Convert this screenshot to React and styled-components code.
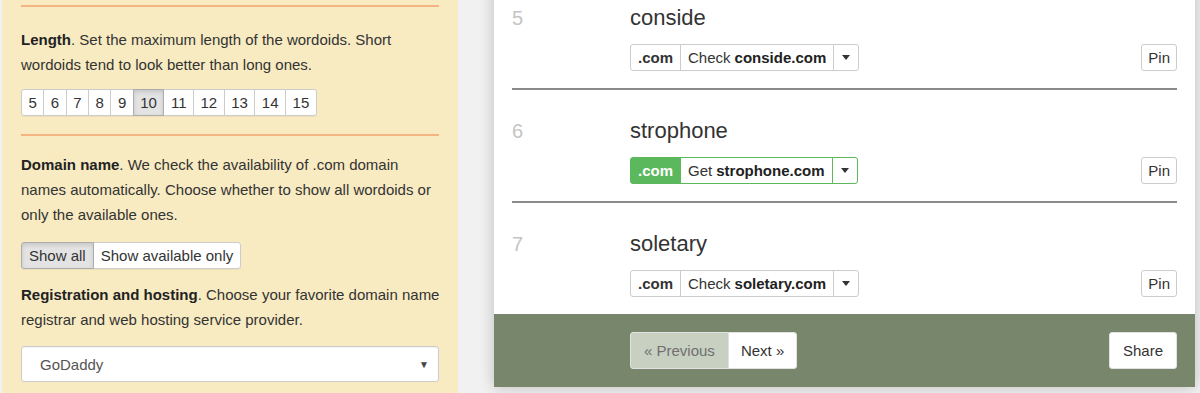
import React from "react";
import styled, { createGlobalStyle } from "styled-components";

const Global = createGlobalStyle`
  html, body { margin: 0; padding: 0; }
  body {
    background: #f1f1f1;
    font-family: "Liberation Sans", Arial, sans-serif;
    font-size: 15px;
    color: #333;
    height: 393px;
    overflow: hidden;
  }
`;

const Page = styled.div`
  display: flex;
  align-items: flex-start;
  gap: 36px;
  padding-left: 2px;
  height: 393px;
`;

const Sidebar = styled.aside`
  width: 456px;
  box-sizing: border-box;
  height: 393px;
  background: #f8ebc2;
  padding: 5px 19px 0 19px;
  flex-shrink: 0;
`;

const Rule = styled.div`
  height: 2px;
  background: #f4b583;
  margin-top: ${(p) => p.$mt || 0}px;
`;

const Para = styled.p`
  margin: ${(p) => p.$mt || 0}px -4px 0 0;
  line-height: 25px;
  font-size: 15px;
  color: #333;
  b { color: #222; }
`;

const Group = styled.div`
  display: inline-flex;
  margin-top: ${(p) => p.$mt || 0}px;
  border-radius: 3px;
  box-shadow: 0 1px 1px rgba(0,0,0,0.05);
`;

const SegButton = styled.button`
  font-family: inherit;
  font-size: 15px;
  line-height: 19px;
  padding: 3px ${(p) => p.$px || 6.5}px;
  margin: 0 0 0 -1px;
  border: 1px solid ${(p) => (p.$active ? "#adadad" : "#ccc")};
  background: ${(p) => (p.$active ? "#e3e3e3" : "#fff")};
  box-shadow: ${(p) => (p.$active ? "inset 0 2px 4px rgba(0,0,0,0.13)" : "none")};
  color: #333;
  position: relative;
  z-index: ${(p) => (p.$active ? 1 : 0)};
  &:first-child { margin-left: 0; border-radius: 3px 0 0 3px; }
  &:last-child { border-radius: 0 3px 3px 0; }
`;

const Select = styled.div`
  margin-top: 14px;
  height: 36px;
  box-sizing: border-box;
  display: flex;
  align-items: center;
  justify-content: space-between;
  background: #fff;
  border: 1px solid #ccc;
  border-radius: 3px;
  padding: 0 9px 0 18px;
  font-size: 15px;
  color: #555;
  box-shadow: inset 0 1px 1px rgba(0,0,0,0.06);
`;

const SelectArrow = styled.span`
  font-size: 10px;
  color: #444;
`;

const Card = styled.main`
  width: 701px;
  flex-shrink: 0;
  margin-top: -23px;
  background: #fff;
  box-shadow: 0 0 14px rgba(0,0,0,0.22);
`;

const List = styled.div`
  padding: 0 18px;
`;

const Row = styled.div`
  display: grid;
  grid-template-columns: 118px 1fr auto;
  grid-template-rows: 28px 27px;
  row-gap: 12px;
  padding: 27px 0 17px;
  border-bottom: ${(p) => (p.$last ? "none" : "2px solid #8a8a8a")};
`;

const Num = styled.div`
  font-size: 20px;
  line-height: 28px;
  color: #c4c4c4;
`;

const Word = styled.div`
  font-size: 22px;
  line-height: 28px;
  color: #333;
  grid-column: 2 / 4;
`;

const DomainGroup = styled.div`
  grid-column: 2;
  display: inline-flex;
  justify-self: start;
`;

const DomainPart = styled.span`
  font-size: 15px;
  line-height: 19px;
  padding: 3px 7px;
  border: 1px solid ${(p) => (p.$ok ? "#5cb85c" : "#ccc")};
  margin-left: -1px;
  background: ${(p) => (p.$fill ? "#5cb85c" : "#fff")};
  color: ${(p) => (p.$fill ? "#fff" : "#333")};
  font-weight: ${(p) => (p.$bold ? 700 : 400)};
  display: flex;
  align-items: center;
  &:first-child { margin-left: 0; border-radius: 3px 0 0 3px; }
  &:last-child { border-radius: 0 3px 3px 0; }
  b { font-weight: 700; color: #222; margin-left: 4px; }
`;

const Caret = styled.span`
  display: inline-block;
  width: 0;
  height: 0;
  border-top: 5px solid #333;
  border-left: 4.5px solid transparent;
  border-right: 4.5px solid transparent;
  margin: 0 1px;
`;

const PinButton = styled.button`
  grid-column: 3;
  font-family: inherit;
  font-size: 15px;
  line-height: 19px;
  padding: 3px 6px;
  border: 1px solid #ccc;
  border-radius: 3px;
  background: #fff;
  color: #333;
`;

const Footer = styled.footer`
  background: #78876b;
  display: flex;
  justify-content: space-between;
  align-items: center;
  padding: 18px 18px 18px 136px;
`;

const Pager = styled.div`
  display: flex;
`;

const PageButton = styled.button`
  font-family: inherit;
  font-size: 15px;
  height: 37px;
  padding: 0 ${(p) => p.$px || 14}px;
  border: 1px solid #e2e2e2;
  background: ${(p) => (p.$disabled ? "#c8d0c2" : "#fff")};
  color: ${(p) => (p.$disabled ? "#6f6f6f" : "#333")};
  margin-left: -1px;
  &:first-child { margin-left: 0; border-radius: 3px 0 0 3px; }
  &:last-child { border-radius: 0 3px 3px 0; }
`;

const ShareButton = styled.button`
  font-family: inherit;
  font-size: 15px;
  height: 37px;
  padding: 0 13px;
  border: 1px solid #e2e2e2;
  border-radius: 3px;
  background: #fff;
  color: #333;
`;

const lengths = [5, 6, 7, 8, 9, 10, 11, 12, 13, 14, 15];

const words = [
  { n: 5, w: "conside", ok: false },
  { n: 6, w: "strophone", ok: true },
  { n: 7, w: "soletary", ok: false },
];

export default function App() {
  return (
    <>
      <Global />
      <Page>
        <Sidebar>
          <Rule />
          <Para $mt={20}>
            <b>Length</b>. Set the maximum length of the wordoids. Short wordoids tend to look better than long ones.
          </Para>
          <Group $mt={12}>
            {lengths.map((l) => (
              <SegButton key={l} $active={l === 10}>{l}</SegButton>
            ))}
          </Group>
          <Rule $mt={18} />
          <Para $mt={16}>
            <b>Domain name</b>. We check the availability of .com domain names automatically. Choose whether to show all wordoids or only the available ones.
          </Para>
          <Group $mt={15}>
            <SegButton $active $px={7}>Show all</SegButton>
            <SegButton $px={7}>Show available only</SegButton>
          </Group>
          <Para $mt={13}>
            <b>Registration and hosting</b>. Choose your favorite domain name registrar and web hosting service provider.
          </Para>
          <Select>
            <span>GoDaddy</span>
            <SelectArrow>▼</SelectArrow>
          </Select>
        </Sidebar>
        <Card>
          <List>
            {words.map((item, i) => (
              <Row key={item.n} $last={i === words.length - 1}>
                <Num>{item.n}</Num>
                <Word>{item.w}</Word>
                <div />
                <DomainGroup>
                  <DomainPart $ok={item.ok} $fill={item.ok} $bold>.com</DomainPart>
                  <DomainPart $ok={item.ok}>
                    {item.ok ? "Get" : "Check"}<b>{item.w}.com</b>
                  </DomainPart>
                  <DomainPart $ok={item.ok}>
                    <Caret />
                  </DomainPart>
                </DomainGroup>
                <PinButton>Pin</PinButton>
              </Row>
            ))}
          </List>
          <Footer>
            <Pager>
              <PageButton $disabled $px={13}>« Previous</PageButton>
              <PageButton $px={12}>Next »</PageButton>
            </Pager>
            <ShareButton>Share</ShareButton>
          </Footer>
        </Card>
      </Page>
    </>
  );
}
